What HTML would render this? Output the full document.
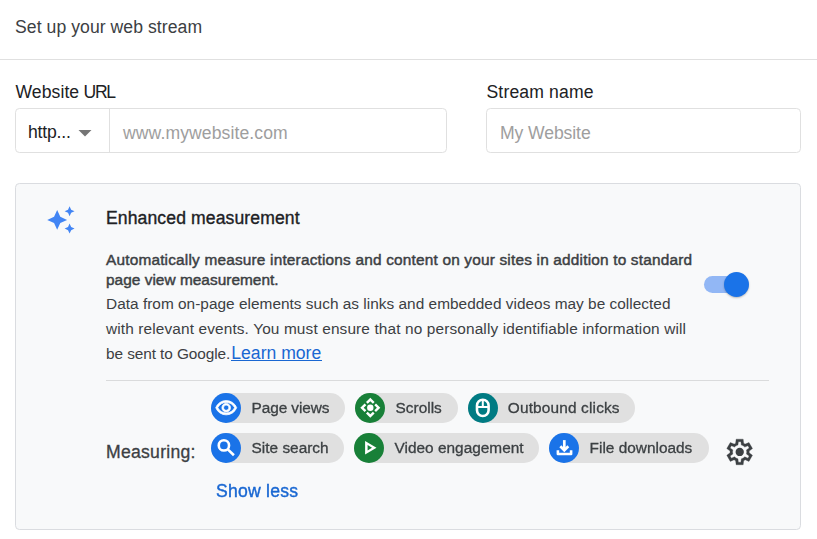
<!DOCTYPE html>
<html>
<head>
<meta charset="utf-8">
<title>Set up your web stream</title>
<style>
html,body{margin:0;padding:0;}
body{width:817px;height:539px;position:relative;overflow:hidden;background:#fff;font-family:"Liberation Sans",sans-serif;color:#3c4043;}
.t{position:absolute;white-space:nowrap;line-height:1;}
.box{position:absolute;box-sizing:border-box;border:1px solid #dadce0;border-radius:4.4px;background:#fff;}
.inp{border-color:#e0e0e0;}
.chip{position:absolute;height:30px;border-radius:15px;background:#e0e0e0;box-sizing:border-box;will-change:transform;}
.chip .ic{position:absolute;left:0;top:0;width:30px;height:30px;border-radius:50%;}
.chip .ic svg{position:absolute;left:3px;top:3px;width:24px;height:24px;fill:#fff;}
.chip .lb{position:absolute;left:40.6px;top:6.6px;font-size:15.4px;line-height:1;white-space:nowrap;color:#3c4043;-webkit-text-stroke:0.3px #3c4043;}
.blue{background:#1a73e8;}
.green{background:#188038;}
.teal{background:#007b83;}
</style>
</head>
<body>

<div class="t" id="title" style="left:15px;top:19px;font-size:17.6px;color:#3c4043;letter-spacing:0.06px;">Set up your web stream</div>
<div style="position:absolute;left:0;top:59px;width:817px;height:1px;background:#e0e0e0;"></div>

<div class="t" id="lurl" style="left:15.5px;top:84px;font-size:17.6px;color:#202124;letter-spacing:0.07px;">Website<span style="letter-spacing:-0.7px"> </span><span style="letter-spacing:-1.25px">URL</span></div>
<div class="box inp" style="left:15px;top:108px;width:432px;height:45px;"></div>
<div style="position:absolute;left:109px;top:109px;width:1px;height:43px;background:#e0e0e0;"></div>
<div class="t" id="http" style="left:28px;top:124px;font-size:17.6px;color:#202124;letter-spacing:-0.2px;">http...</div>
<svg style="position:absolute;left:78px;top:130px;" width="14" height="7" viewBox="0 0 14 7"><path d="M0.5 0h13L7 6.5z" fill="#757575"/></svg>
<div class="t" id="ph1" style="left:123px;top:125px;font-size:17.6px;color:#9e9e9e;letter-spacing:0.09px;">www.mywebsite.com</div>

<div class="t" id="lname" style="left:486.5px;top:84px;font-size:17.6px;color:#202124;letter-spacing:0.14px;">Stream name</div>
<div class="box inp" style="left:486px;top:108px;width:315px;height:45px;"></div>
<div class="t" id="ph2" style="left:500px;top:125px;font-size:17.6px;color:#9e9e9e;letter-spacing:-0.1px;">My Website</div>

<div class="box" style="left:15px;top:183px;width:786px;height:347px;background:#f8f9fa;"></div>

<svg id="spark" style="position:absolute;left:46.1px;top:205.1px;" width="29.8" height="29.8" viewBox="0 0 24 24">
<path fill="#4285f4" d="M19 9l1.25-2.75L23 5l-2.75-1.25L19 1l-1.25 2.75L15 5l2.75 1.25L19 9zm-7.5.5L9 4 6.500 9.500 1 12l5.500 2.500L9 20l2.500-5.500L17 12l-5.500-2.500zM19 15l-1.250 2.750L15 19l2.750 1.250L19 23l1.250-2.750L23 19l-2.750-1.250L19 15z"/>
</svg>

<div class="t" id="enh" style="left:106px;top:209.6px;font-size:17.6px;color:#202124;letter-spacing:0.1px;-webkit-text-stroke:0.35px #202124;">Enhanced measurement</div>

<div class="t" id="b1" style="left:106px;top:251.6px;font-size:15.4px;color:#3c4043;letter-spacing:0.186px;-webkit-text-stroke:0.45px #3c4043;">Automatically measure interactions and content on your sites in addition to standard</div>
<div class="t" id="b2" style="left:106px;top:271.6px;font-size:15.4px;color:#3c4043;letter-spacing:0.03px;-webkit-text-stroke:0.45px #3c4043;">page view measurement.</div>

<div class="t" id="p1" style="left:106px;top:296px;font-size:15.4px;color:#3c4043;letter-spacing:0.02px;">Data from on-page elements such as links and embedded videos may be collected</div>
<div class="t" id="p2" style="left:106px;top:321px;font-size:15.4px;color:#3c4043;letter-spacing:0.13px;">with relevant events. You must ensure that no personally identifiable information will</div>
<div class="t" id="p3" style="left:106px;top:346px;font-size:15.4px;color:#3c4043;letter-spacing:-0.09px;">be sent to Google.</div>
<div class="t" id="lm" style="left:231.3px;top:345px;font-size:17.6px;color:#1967d2;">Learn more</div>
<div style="position:absolute;left:231.3px;top:360px;width:91px;height:1px;background:#1967d2;"></div>

<!-- toggle -->
<div style="position:absolute;left:704px;top:276px;width:40px;height:17px;border-radius:8.5px;background:#92b7f5;"></div>
<div style="position:absolute;left:724px;top:272px;width:25px;height:25px;border-radius:50%;background:#1a73e8;box-shadow:0 1px 2px rgba(0,0,0,.25);"></div>

<div style="position:absolute;left:106px;top:380px;width:663px;height:1px;background:#dadbdc;"></div>

<div class="t" id="meas" style="left:106px;top:444.3px;font-size:17.6px;color:#3c4043;letter-spacing:0.27px;-webkit-text-stroke:0.3px #3c4043;">Measuring:</div>

<div class="chip" id="c1" style="left:211px;top:393px;width:134px;"><div class="ic blue"><svg viewBox="0 0 24 24"><path transform="translate(12.2 11.7) scale(0.955) translate(-12 -11.5)" stroke="#fff" stroke-width="0.8" stroke-linejoin="round" d="M12 16q1.875 0 3.188-1.312T16.5 11.5t-1.312-3.187T12 7 8.813 8.313 7.5 11.5t1.313 3.188T12 16m0-1.800q-1.125 0-1.912-.787T9.300 11.500t.788-1.912T12 8.800t1.913.788.787 1.912-.787 1.913T12 14.200m0 4.800q-3.650 0-6.650-2.037T1 11.500q1.350-3.425 4.350-5.462T12 4t6.650 2.038T23 11.500q-1.350 3.425-4.350 5.463T12 19m0-2q2.825 0 5.188-1.487T20.800 11.500q-1.250-2.525-3.613-4.012T12 6 6.813 7.488 3.200 11.500q1.250 2.525 3.613 4.013T12 17"/></svg></div><div class="lb" id="l1" style="letter-spacing:-0.1px">Page views</div></div>
<div class="chip" id="c2" style="left:355px;top:393px;width:103px;"><div class="ic green"><svg viewBox="0 0 24 24"><g transform="translate(0.3 -0.25)"><path transform="rotate(0 12 12)" d="M12 2 L16.3 6.3 L14.6 8 L12 5.4 L9.4 8 L7.7 6.3 Z"/><path transform="rotate(90 12 12)" d="M12 2 L16.3 6.3 L14.6 8 L12 5.4 L9.4 8 L7.7 6.3 Z"/><path transform="rotate(180 12 12)" d="M12 2 L16.3 6.3 L14.6 8 L12 5.4 L9.4 8 L7.7 6.3 Z"/><path transform="rotate(270 12 12)" d="M12 2 L16.3 6.3 L14.6 8 L12 5.4 L9.4 8 L7.7 6.3 Z"/><circle cx="12" cy="12" r="3.2"/></g></svg></div><div class="lb" id="l2">Scrolls</div></div>
<div class="chip" id="c3" style="left:468px;top:393px;width:167px;"><div class="ic teal"><svg viewBox="0 0 24 24"><g fill="none" stroke="#fff"><rect x="6" y="3.75" width="11.6" height="16.25" rx="5.8" stroke-width="2.6"/><path d="M6 11H17.6M11.8 3.75V11" stroke-width="2"/></g></svg></div><div class="lb" id="l3" style="left:39.8px;letter-spacing:0.16px;">Outbound clicks</div></div>
<div class="chip" id="c4" style="left:211px;top:433px;width:133px;"><div class="ic blue"><svg viewBox="0 0 24 24"><g fill="none" stroke="#fff" stroke-width="2.6"><circle cx="9.9" cy="9.4" r="5.15"/><path d="M13.3 12.9L19.9 19.3"/></g></svg></div><div class="lb" id="l4">Site search</div></div>
<div class="chip" id="c5" style="left:354px;top:433px;width:185px;"><div class="ic green"><svg viewBox="0 0 24 24"><path fill-rule="evenodd" d="M8.1 4.95L19.5 11.75L8.1 18.55ZM10.6 9L15 11.75L10.6 14.5Z"/></svg></div><div class="lb" id="l5">Video engagement</div></div>
<div class="chip" id="c6" style="left:549px;top:433px;width:160px;"><div class="ic blue"><svg viewBox="0 0 24 24"><g fill="none" stroke="#fff" stroke-width="2.6"><path d="M5.9 14.3V18H19.1V14.3" stroke-linejoin="round"/><path d="M12.3 4.1V13.5" stroke-width="2.7"/><path d="M8.3 10.3L12.3 14.3L16.3 10.3" stroke-width="2.7" stroke-linejoin="miter"/></g></svg></div><div class="lb" id="l6">File downloads</div></div>

<svg id="gear" style="position:absolute;left:724px;top:436px;" width="32" height="32" viewBox="0 0 32 32"><g transform="translate(0.29 0.59) scale(1.28)"><circle cx="12.05" cy="12" r="3.25" fill="#3c4043"/><path fill="#3c4043" stroke="#3c4043" stroke-width="0.25" stroke-linejoin="round" d="m9.250 22-.400-3.200q-.325-.125-.612-.300t-.563-.375L4.700 19.375l-2.750-4.750 2.575-1.950Q4.500 12.500 4.500 12.338v-.675q0-.163.025-.338L1.950 9.375l2.750-4.750 2.975 1.250q.275-.200.575-.375t.600-.300l.400-3.200h5.500l.400 3.200q.325.125.613.300t.562.375l2.975-1.250 2.750 4.750-2.575 1.950q.025.175.025.338v.674q0 .163-.050.338l2.575 1.950-2.750 4.750-2.950-1.250q-.275.200-.575.375t-.600.300l-.400 3.200zM11 20h1.975l.350-2.650q.775-.200 1.438-.587t1.212-.938l2.475 1.025.975-1.700-2.150-1.625q.125-.350.175-.737T17.500 12t-.050-.787-.175-.738l2.150-1.625-.975-1.700-2.475 1.050q-.550-.575-1.212-.962t-1.438-.588L13 4h-1.975l-.350 2.650q-.775.200-1.437.588t-1.213.937L5.550 7.150l-.975 1.700 2.150 1.600q-.125.375-.175.750t-.050.800q0 .400.050.775t.175.750l-2.150 1.625.975 1.700 2.475-1.050q.550.575 1.213.963t1.437.587z"/></g></svg>

<div class="t" id="sl" style="will-change:transform;left:216px;top:482.6px;font-size:17.6px;color:#1967d2;letter-spacing:0.22px;-webkit-text-stroke:0.4px #1967d2;">Show less</div>

</body>
</html>
